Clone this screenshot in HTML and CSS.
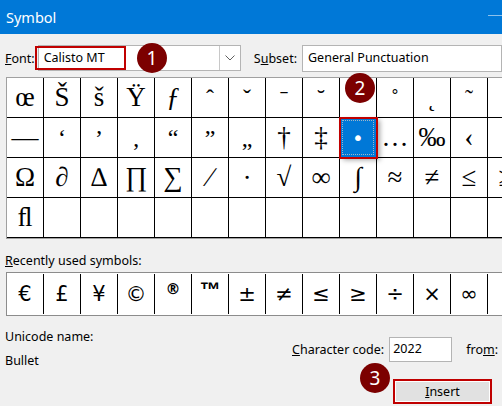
FILE: index.html
```html
<!DOCTYPE html>
<html lang="en">
<head>
  <meta charset="UTF-8" />
  <title>Symbol</title>
  <link rel="stylesheet" href="styles.css">
</head>
<body>
  <div class="dialog">
    <header class="titlebar">
      <span class="title">Symbol</span>
      <span class="minimize"></span>
    </header>

    <div class="font-row">
      <label class="label"><u>F</u>ont:</label>
      <div class="select font-select">
        <span class="select-text">Calisto MT</span>
        <span class="drop">
          <svg width="10" height="6" viewBox="0 0 10 6"><polyline points="0.5,0.5 5,5 9.5,0.5" fill="none" stroke="#606060" stroke-width="1"/></svg>
        </span>
      </div>
      <label class="label subset-label">S<u>u</u>bset:</label>
      <div class="select subset-select">
        <span class="select-text">General Punctuation</span>
      </div>
    </div>

    <div class="symbol-grid">
      <div class="cell">œ</div>
      <div class="cell">Š</div>
      <div class="cell">š</div>
      <div class="cell">Ÿ</div>
      <div class="cell italic">ƒ</div>
      <div class="cell small">ˆ</div>
      <div class="cell small">ˇ</div>
      <div class="cell small">ˉ</div>
      <div class="cell small">˘</div>
      <div class="cell small">˙</div>
      <div class="cell small">˚</div>
      <div class="cell small">˛</div>
      <div class="cell small">˜</div>
      <div class="cell"></div>

      <div class="cell">—</div>
      <div class="cell small">‘</div>
      <div class="cell small">’</div>
      <div class="cell small">‚</div>
      <div class="cell small">“</div>
      <div class="cell small">”</div>
      <div class="cell small">„</div>
      <div class="cell">†</div>
      <div class="cell">‡</div>
      <div class="cell selected">•</div>
      <div class="cell">…</div>
      <div class="cell">‰</div>
      <div class="cell">‹</div>
      <div class="cell"></div>

      <div class="cell">Ω</div>
      <div class="cell">∂</div>
      <div class="cell">∆</div>
      <div class="cell">∏</div>
      <div class="cell">∑</div>
      <div class="cell">∕</div>
      <div class="cell">∙</div>
      <div class="cell">√</div>
      <div class="cell">∞</div>
      <div class="cell">∫</div>
      <div class="cell">≈</div>
      <div class="cell">≠</div>
      <div class="cell">≤</div>
      <div class="cell">≥</div>

      <div class="cell">ﬂ</div>
      <div class="cell"></div>
      <div class="cell"></div>
      <div class="cell"></div>
      <div class="cell"></div>
      <div class="cell"></div>
      <div class="cell"></div>
      <div class="cell"></div>
      <div class="cell"></div>
      <div class="cell"></div>
      <div class="cell"></div>
      <div class="cell"></div>
      <div class="cell"></div>
      <div class="cell"></div>
    </div>

    <div class="recent-label"><u>R</u>ecently used symbols:</div>
    <div class="recent">
      <div class="recent-cell">€</div>
      <div class="recent-cell">£</div>
      <div class="recent-cell">¥</div>
      <div class="recent-cell">©</div>
      <div class="recent-cell sup">®</div>
      <div class="recent-cell sup tm">™</div>
      <div class="recent-cell">±</div>
      <div class="recent-cell">≠</div>
      <div class="recent-cell">≤</div>
      <div class="recent-cell">≥</div>
      <div class="recent-cell">÷</div>
      <div class="recent-cell">×</div>
      <div class="recent-cell">∞</div>
      <div class="recent-cell"></div>
    </div>

    <div class="info">
      <div class="unicode">
        <div>Unicode name:</div>
        <div class="unicode-value">Bullet</div>
      </div>
      <div class="code">
        <label class="label"><u>C</u>haracter code:</label>
        <div class="code-input">2022</div>
        <label class="label from">fro<u>m</u>:</label>
      </div>
    </div>

    <div class="actions">
      <button class="insert"><u>I</u>nsert</button>
    </div>
  </div>

  <div class="highlight font-highlight"></div>
  <span class="step step-1">1</span>
  <span class="step step-2">2</span>
  <span class="step step-3">3</span>
</body>
</html>
```

FILE: styles.css
```css
:root {
  --blue: #0078d7;
  --mark: #c00000;
  --step: #7c0000;
  --bg: #f0f0f0;
}
* { box-sizing: border-box; }
html, body {
  margin: 0;
  padding: 0;
  width: 502px;
  height: 406px;
  overflow: hidden;
  background: var(--bg);
  font-family: 'Noto Sans', 'Open Sans', sans-serif;
  font-size: 12.5px;
  color: #000;
}
body { position: relative; }

.dialog { width: 502px; }

.titlebar {
  display: flex;
  align-items: center;
  height: 34px;
  background: var(--blue);
  color: #fff;
}
.title {
  padding-left: 6px;
  font-size: 14.5px;
  line-height: 34px;
  margin-top: -1px;
}
.minimize {
  margin-left: auto;
  width: 14px;
  height: 1px;
  margin-top: -4px;
  background: #8cc1ec;
}

.font-row {
  display: flex;
  align-items: center;
  margin-top: 11px;
  padding-left: 5px;
  height: 26px;
}
.label { white-space: nowrap; }
.select {
  display: flex;
  align-items: center;
  height: 26px;
  background: #fff;
  border: 1px solid #b4b4b4;
}
.select-text { padding-left: 5px; line-height: 24px; }
.font-select {
  width: 254px;
  margin-left: 3px;
}
.drop {
  display: flex;
  align-items: center;
  justify-content: center;
  margin-left: auto;
  width: 21px;
  height: 24px;
  border-left: 1px solid #c8c8c8;
  background: #fff;
}
.subset-label { margin-left: 13px; }
.subset-select {
  width: 200px;
  height: 27px;
  margin-left: 5px;
  flex-shrink: 0;
}

.symbol-grid {
  display: grid;
  grid-template-columns: repeat(14, 37px);
  grid-auto-rows: 40px;
  width: max-content;
  margin: 6px 0 0 6px;
  border-top: 1px solid #a0a0a0;
  border-left: 1px solid #a0a0a0;
  border-bottom: 1px solid #a0a0a0;
  background: #fff;
}
.cell {
  display: flex;
  align-items: center;
  justify-content: center;
  border-right: 1px solid #000;
  border-bottom: 1px solid #000;
  font-family: 'Liberation Serif', 'DejaVu Serif', serif;
  font-size: 27px;
  line-height: 1;
}
.cell.small { font-size: 24px; }
.cell.italic { font-style: italic; }
.cell.selected {
  background: var(--blue);
  color: #fff;
  outline: 2px solid var(--mark);
  outline-offset: -1px;
  box-shadow: 3px 2px 5px rgba(0, 0, 0, 0.35);
  position: relative;
  z-index: 1;
  font-family: 'DejaVu Sans', sans-serif;
  font-size: 20px;
}
.cell.selected::after {
  content: '';
  position: absolute;
  inset: 2px;
  border: 1px dotted #9fb6c9;
}

.recent-label {
  margin: 13px 0 0 5px;
  line-height: 18px;
}
.recent {
  display: flex;
  width: max-content;
  margin: 2px 0 0 6px;
  padding: 1px 0;
  border: 1px solid #8c8c8c;
  border-right: none;
  background: #fff;
}
.recent-cell {
  box-sizing: content-box;
  display: flex;
  align-items: center;
  justify-content: center;
  width: 36px;
  height: 40px;
  border-right: 1px solid #000;
  font-family: 'DejaVu Sans', 'Liberation Sans', sans-serif;
  font-size: 21px;
}
.recent-cell.sup {
  align-items: flex-start;
  font-size: 15px;
  font-weight: bold;
  line-height: 30px;
}
.recent-cell.tm {
  font-family: 'Liberation Sans', sans-serif;
  font-size: 21px;
  line-height: 32px;
}

.info {
  display: flex;
  align-items: flex-start;
  margin-top: 13px;
  padding-left: 5px;
}
.unicode {
  width: 287px;
  line-height: 16px;
}
.unicode-value { margin-top: 8px; }
.code {
  display: flex;
  align-items: center;
  margin-top: 8px;
}
.code-input {
  width: 63px;
  height: 25px;
  margin-left: 5px;
  padding: 1px 0 0 3px;
  border: 1px solid #b4b4b4;
  background: #fff;
  line-height: 20px;
}
.from { margin-left: 14px; }

.actions {
  margin-top: 10px;
  padding-left: 393px;
}
.insert {
  width: 99px;
  height: 25px;
  padding: 0;
  font-family: inherit;
  font-size: 12.5px;
  color: #000;
  background: #e1e1e1;
  border: 2px solid var(--mark);
  box-shadow: inset 0 0 0 1px #fff;
}

.highlight {
  position: absolute;
  border: 2px solid var(--mark);
}
.font-highlight {
  left: 35px;
  top: 46px;
  width: 91px;
  height: 24px;
}

.step {
  position: absolute;
  width: 30px;
  height: 30px;
  border-radius: 50%;
  background: var(--step);
  color: #fff;
  font-size: 19px;
  line-height: 30px;
  text-align: center;
}
.step-1 { left: 137px; top: 43px; }
.step-2 { left: 345px; top: 73px; }
.step-3 { left: 360px; top: 363px; }
```
